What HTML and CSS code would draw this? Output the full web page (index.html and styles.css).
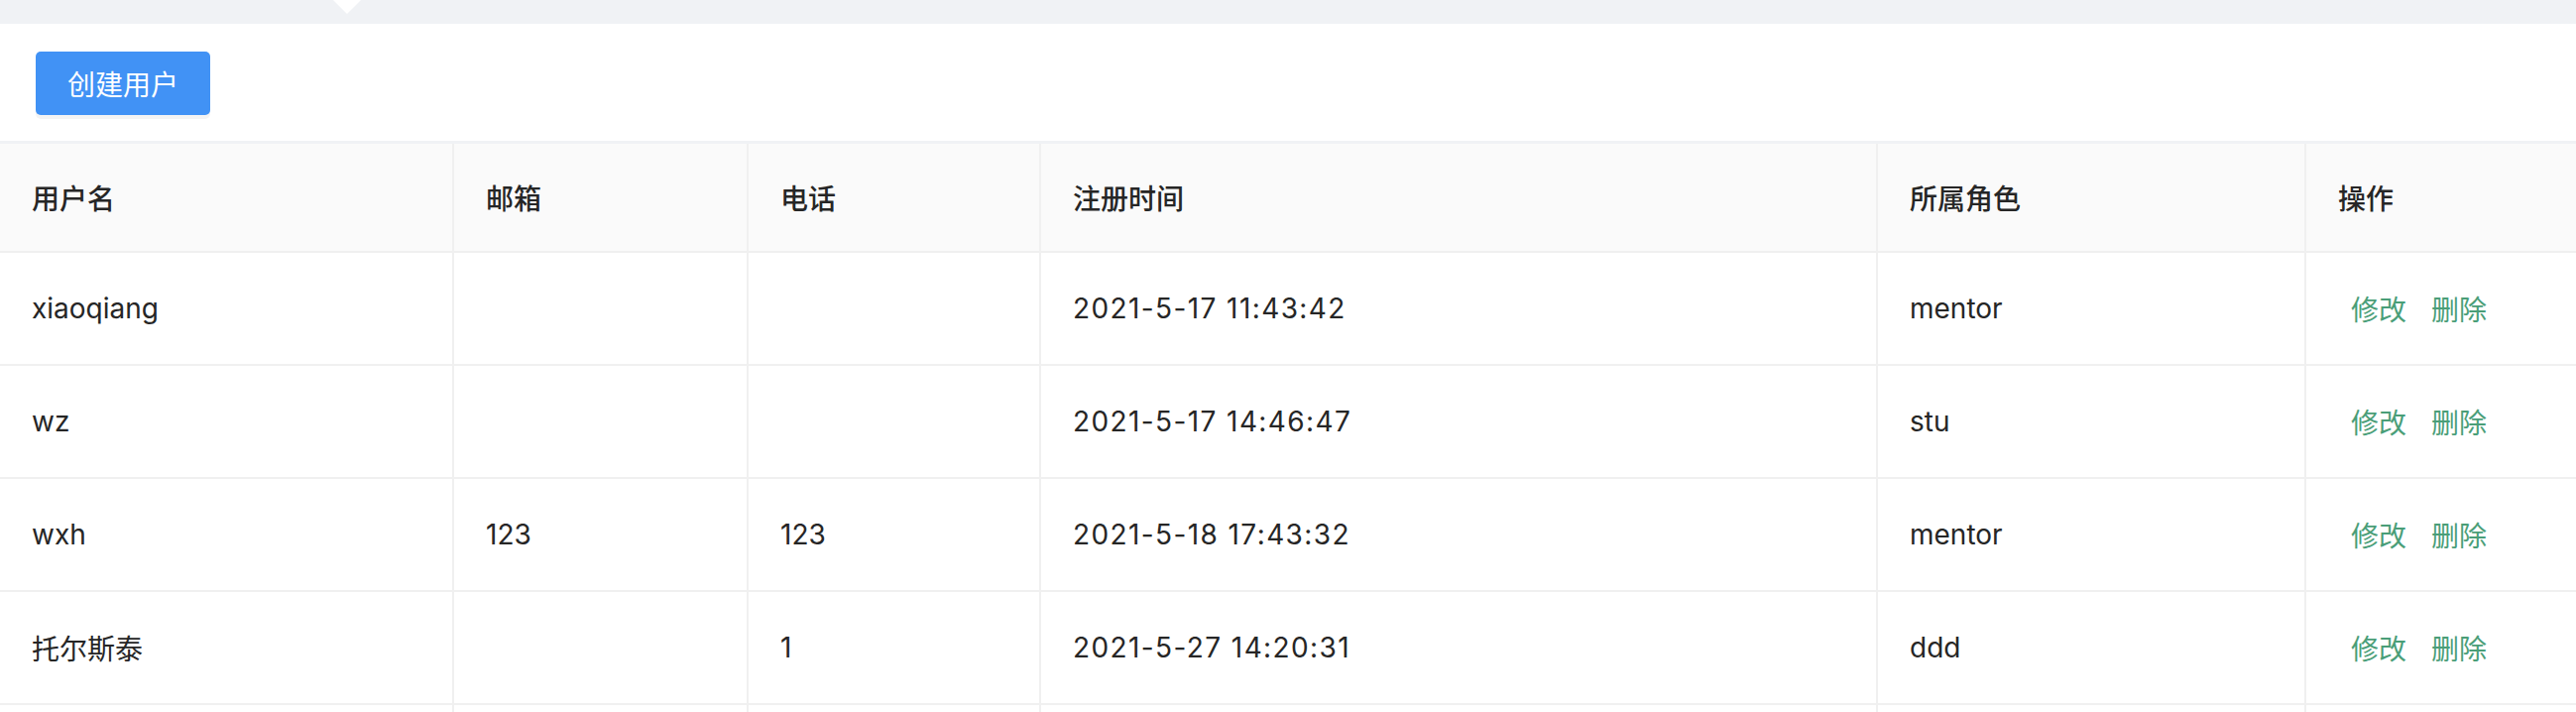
FILE: index.html
```html
<!DOCTYPE html>
<html lang="zh-CN">
<head>
    <meta charset="UTF-8">
    <meta name="viewport" content="width=device-width, initial-scale=1.0">
    <title>用户管理</title>
    <link rel="stylesheet" href="styles.css">
</head>
<body>

    <div class="topbar"></div>

    <div class="toolbar">
        <button class="btn-primary">创建用户</button>
    </div>

    <div class="user-table">
        <div class="row head">
            <div class="cell">用户名</div>
            <div class="cell">邮箱</div>
            <div class="cell">电话</div>
            <div class="cell">注册时间</div>
            <div class="cell">所属角色</div>
            <div class="cell">操作</div>
        </div>
        <div class="row">
            <div class="cell">xiaoqiang</div>
            <div class="cell"></div>
            <div class="cell"></div>
            <div class="cell time">2021-5-17 11:43:42</div>
            <div class="cell">mentor</div>
            <div class="cell ops"><a href="#">修改</a><a href="#">删除</a></div>
        </div>
        <div class="row">
            <div class="cell">wz</div>
            <div class="cell"></div>
            <div class="cell"></div>
            <div class="cell time">2021-5-17 14:46:47</div>
            <div class="cell">stu</div>
            <div class="cell ops"><a href="#">修改</a><a href="#">删除</a></div>
        </div>
        <div class="row">
            <div class="cell">wxh</div>
            <div class="cell">123</div>
            <div class="cell">123</div>
            <div class="cell time">2021-5-18 17:43:32</div>
            <div class="cell">mentor</div>
            <div class="cell ops"><a href="#">修改</a><a href="#">删除</a></div>
        </div>
        <div class="row">
            <div class="cell">托尔斯泰</div>
            <div class="cell"></div>
            <div class="cell">1</div>
            <div class="cell time">2021-5-27 14:20:31</div>
            <div class="cell">ddd</div>
            <div class="cell ops"><a href="#">修改</a><a href="#">删除</a></div>
        </div>
        <!-- 下一行只露出边框 -->
        <div class="row">
            <div class="cell"></div>
            <div class="cell"></div>
            <div class="cell"></div>
            <div class="cell"></div>
            <div class="cell"></div>
            <div class="cell"></div>
        </div>
    </div>

</body>
</html>
```

FILE: styles.css
```css
*{
    margin: 0;
    padding: 0;
    box-sizing: border-box;
}
body{
    background: #f0f2f5;
    font-family: Inter, "Noto Sans CJK SC", sans-serif;
    font-size: 28px;
    color: #262626;
}
.topbar{
    position: relative;
    height: 24px;
    background: #f0f2f5;
}
/* 菜单选中的小三角 */
.topbar::after{
    content: "";
    position: absolute;
    left: 336px;
    top: 0;
    border-left: 14px solid transparent;
    border-right: 14px solid transparent;
    border-top: 14px solid #fff;
}
.toolbar{
    background: #fff;
    height: 118px;
    padding: 28px 36px 0;
}
.btn-primary{
    height: 64px;
    padding: 0 32px;
    border: none;
    border-radius: 5px;
    background: #4192f5;
    color: #fff;
    font-family: inherit;
    font-size: 28px;
    box-shadow: 0 4px 0 rgba(0,0,0,.045);
    cursor: pointer;
}
.user-table{
    margin-top: 3px;
    background: #fff;
}
.row{
    display: grid;
    grid-template-columns: 458px 297px 295px 844px 432px 1fr;
    height: 114px;
    border-bottom: 2px solid #f0f0f0;
}
.row.head{
    height: 110px;
    background: #fafafa;
    font-weight: 500;
}
.cell{
    display: flex;
    align-items: center;
    padding: 0 32px;
    border-right: 2px solid #f0f0f0;
    white-space: nowrap;
}
.cell:last-child{
    border-right: none;
}
.cell.time{
    letter-spacing: 1.4px;
}
.ops{
    padding-left: 45px;
}
.ops a{
    color: #4a9e78;
    text-decoration: none;
}
.ops a + a{
    margin-left: 25px;
}
```
